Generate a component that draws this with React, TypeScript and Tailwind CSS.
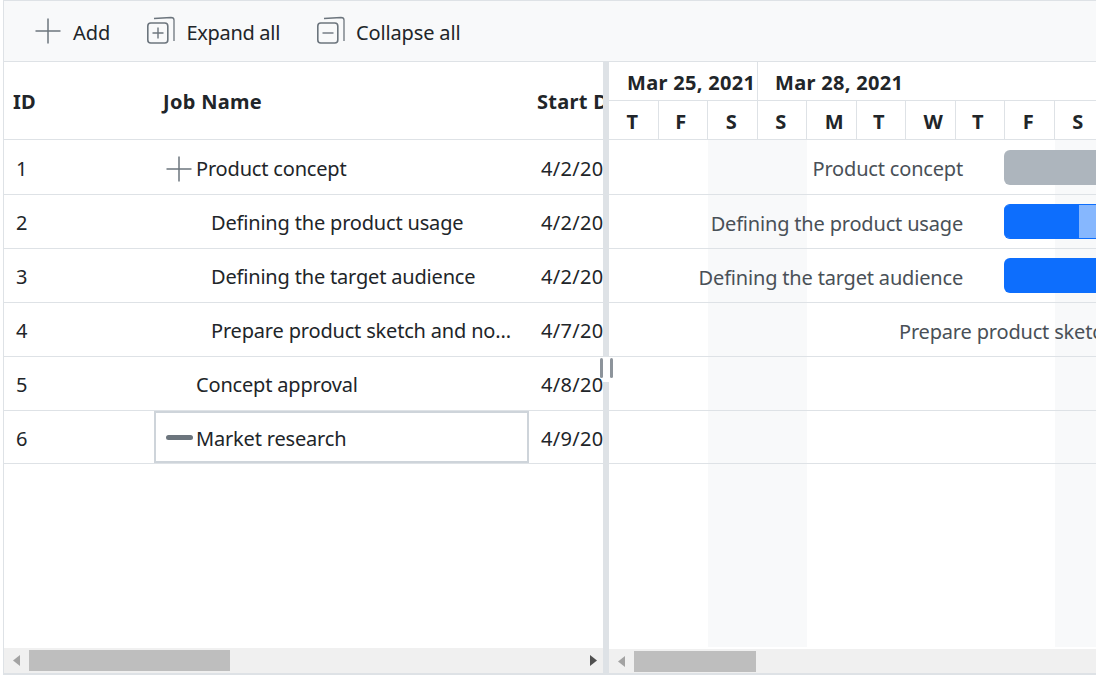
const font = "font-['Noto_Sans','Open_Sans',sans-serif]";

const days = [
  { d: "T", w: false, nudge: "pr-[2px]" },
  { d: "F", w: false, nudge: "pr-[4px]" },
  { d: "S", w: true, nudge: "pr-[2px]" },
  { d: "S", w: true, nudge: "pr-[2px]" },
  { d: "M", w: false, nudge: "pl-[6px]" },
  { d: "T", w: false, nudge: "pr-[4px]" },
  { d: "W", w: false, nudge: "pl-[6px]" },
  { d: "T", w: false, nudge: "pr-[4px]" },
  { d: "F", w: false, nudge: "pr-[2px]" },
  { d: "S", w: true, nudge: "pr-[2px]" },
];

const rows = [
  { id: 1, name: "Product concept", date: "4/2/2021", indent: "pl-[41px]", icon: "plus", h: "h-[55px]" },
  { id: 2, name: "Defining the product usage", date: "4/2/2021", indent: "pl-[56px]", h: "h-[54px]" },
  { id: 3, name: "Defining the target audience", date: "4/2/2021", indent: "pl-[56px]", h: "h-[54px]" },
  { id: 4, name: "Prepare product sketch and no...", date: "4/7/2021", indent: "pl-[56px]", h: "h-[54px]" },
  { id: 5, name: "Concept approval", date: "4/8/2021", indent: "pl-[41px]", h: "h-[54px]" },
  { id: 6, name: "Market research", date: "4/9/2021", indent: "pl-[41px]", icon: "minus", selected: true, h: "h-[53px]" },
];

function PlusIcon() {
  return (
    <svg width="26" height="26" viewBox="0 0 26 26" className="shrink-0">
      <path d="M13 0.5v25M0.5 13h25" stroke="#6c757d" strokeWidth="1.5" fill="none" />
    </svg>
  );
}

function StackIcon({ plus }: { plus: boolean }) {
  return (
    <svg width="30" height="30" viewBox="0 0 30 30" className="shrink-0">
      <rect x="1.8" y="7" width="20" height="20" rx="3" stroke="#6c757d" strokeWidth="1.6" fill="none" />
      <path d="M8 2.5 L25 1.5 Q28 1.5 28 4 V25" stroke="#6c757d" strokeWidth="1.3" fill="none" />
      <path d={plus ? "M6.5 17h11M12 11.5v11" : "M6.5 17h11"} stroke="#6c757d" strokeWidth="1.4" fill="none" />
    </svg>
  );
}

function Arrow({ dir, dark }: { dir: "l" | "r"; dark?: boolean }) {
  return (
    <svg width="7" height="11" viewBox="0 0 7 11" className="shrink-0">
      <path d={dir === "l" ? "M7 0v11L0 5.5z" : "M0 0v11l7-5.5z"} fill={dark ? "#505050" : "#a3a3a3"} />
    </svg>
  );
}

function Toolbar() {
  return (
    <div className="flex h-[62px] items-center border-y border-[#dee2e6] bg-[#f8f9fa] pl-[31px] text-[20px] leading-none text-[#212529]">
      <div className="flex items-center">
        <PlusIcon />
        <span className="ml-[12px] pt-[4px]">Add</span>
      </div>
      <div className="ml-[36px] flex items-center">
        <StackIcon plus />
        <span className="ml-[10px] pt-[4px] tracking-[-0.3px]">Expand all</span>
      </div>
      <div className="ml-[36px] flex items-center">
        <StackIcon plus={false} />
        <span className="ml-[10px] pt-[4px] tracking-[-0.15px]">Collapse all</span>
      </div>
    </div>
  );
}

function Grid() {
  return (
    <div className="relative flex h-[611px] w-[599px] shrink-0 flex-col overflow-hidden">
      <div className="flex h-[78px] shrink-0 items-center border-b border-[#dee2e6] pt-[2px] text-[20px] font-bold tracking-[0.3px] text-[#212529]">
        <div className="w-[151px] shrink-0 pl-[9px]">ID</div>
        <div className="w-[374px] shrink-0 pl-[8px]">Job Name</div>
        <div className="shrink-0 whitespace-nowrap pl-[8px]">Start Date</div>
      </div>
      {rows.map((r) => (
        <div key={r.id} className={`flex ${r.h} shrink-0 items-center border-b border-[#dee2e6] text-[20px] tracking-[-0.18px] text-[#212529]`}>
          <div className={`${r.selected ? "w-[150px]" : "w-[151px]"} shrink-0 pl-[12px] pt-[3px]`}>{r.id}</div>
          <div
            className={`relative flex h-full shrink-0 items-center whitespace-nowrap pt-[3px] ${r.indent} ${r.selected ? "w-[375px] border-2 border-[#ced4da]" : "w-[374px]"}`}
          >
            {r.icon === "plus" && (
              <span className="absolute left-[11px] top-[16px]">
                <PlusIcon />
              </span>
            )}
            {r.icon === "minus" && <span className="absolute left-[10px] top-[22px] h-[5px] w-[27px] rounded-full bg-[#6c757d]" />}
            <span className={r.selected ? "-ml-[1px]" : ""}>{r.name}</span>
          </div>
          <div className="shrink-0 whitespace-nowrap pl-[12px] pt-[3px] tracking-[0.3px]">{r.date}</div>
        </div>
      ))}
      <div className="flex-1" />
      <div className="flex h-[25px] shrink-0 items-center bg-[#f0f0f0] pl-[9px] pr-[6px]">
        <Arrow dir="l" />
        <div className="ml-[9px] h-[21px] w-[201px] bg-[#bebebe]" />
        <div className="flex-1" />
        <Arrow dir="r" dark />
      </div>
    </div>
  );
}

function Timeline() {
  return (
    <div className="relative h-[611px] flex-1 overflow-hidden">
      <div className="flex h-[39px] items-center border-b border-[#dee2e6] text-[20px] font-bold leading-none tracking-[0.3px] text-[#212529]">
        <div className="flex h-full w-[149px] shrink-0 items-center border-r border-[#dee2e6] pl-[18px] pt-[3px] whitespace-nowrap">Mar 25, 2021</div>
        <div className="pl-[17px] pt-[3px] whitespace-nowrap">Mar 28, 2021</div>
      </div>
      <div className="flex h-[39px] border-b border-[#dee2e6]">
        {days.map((x, i) => (
          <div
            key={i}
            className={`flex h-full w-[49.5px] shrink-0 items-center justify-center border-r border-[#dee2e6] pt-[3px] text-[20px] font-bold leading-none text-[#212529] ${x.nudge}`}
          >
            {x.d}
          </div>
        ))}
      </div>
      <div className="relative h-[507px] overflow-hidden">
        <div className="absolute inset-0 flex">
          {days.map((x, i) => (
            <div key={i} className={`h-full w-[49.5px] shrink-0 ${x.w ? "bg-[#f8f9fa]" : ""}`} />
          ))}
        </div>
        <div className="relative text-[20px] tracking-[-0.18px] text-[#495057]">
          <div className="flex h-[55px] items-center border-b border-[#dee2e6]">
            <div className="w-[354px] shrink-0 whitespace-nowrap pt-[3px] text-right">Product concept</div>
            <div className="ml-[41px] h-[35px] flex-1 rounded-l-[6px] bg-[#adb5bd]" />
          </div>
          <div className="flex h-[54px] items-center border-b border-[#dee2e6]">
            <div className="w-[354px] shrink-0 whitespace-nowrap pt-[5px] text-right">Defining the product usage</div>
            <div className="ml-[41px] h-[35px] flex-1 overflow-hidden rounded-l-[6px] border-y border-[#0d6efd] bg-[#86b7fe]">
              <div className="h-full w-[75px] bg-[#0d6efd]" />
            </div>
          </div>
          <div className="flex h-[54px] items-center border-b border-[#dee2e6]">
            <div className="w-[354px] shrink-0 whitespace-nowrap pt-[5px] text-right">Defining the target audience</div>
            <div className="ml-[41px] h-[35px] flex-1 rounded-l-[6px] bg-[#0d6efd]" />
          </div>
          <div className="flex h-[54px] items-center border-b border-[#dee2e6] pl-[290px]">
            <div className="whitespace-nowrap pt-[5px]">Prepare product sketch and notes</div>
          </div>
          <div className="h-[54px] border-b border-[#dee2e6]" />
          <div className="h-[53px] border-b border-[#dee2e6]" />
        </div>
      </div>
      <div className="mt-[2px] flex h-[24px] items-center bg-[#f0f0f0] pl-[9px]">
        <Arrow dir="l" />
        <div className="ml-[9px] mt-[1px] h-[21px] w-[122px] bg-[#bebebe]" />
      </div>
    </div>
  );
}

export default function App() {
  return (
    <div className={`h-[681px] w-[1096px] overflow-hidden bg-white ${font}`}>
      <div className="relative ml-[3px] h-[675px] border-b-2 border-l border-[#dee2e6]">
        <Toolbar />
        <div className="flex">
          <Grid />
          <div className="w-[6px] shrink-0 bg-[#dee2e6]" />
          <Timeline />
        </div>
        {/* splitter grip, sits over the divider */}
        <div className="absolute left-[599px] top-[357px] h-[25px] w-[6px] bg-white" />
        <div className="absolute left-[596px] top-[358px] flex h-[20px] w-[13px] justify-between">
          <span className="h-full w-[3px] rounded-sm bg-[#8d949b]" />
          <span className="h-full w-[3px] rounded-sm bg-[#8d949b]" />
        </div>
      </div>
    </div>
  );
}
